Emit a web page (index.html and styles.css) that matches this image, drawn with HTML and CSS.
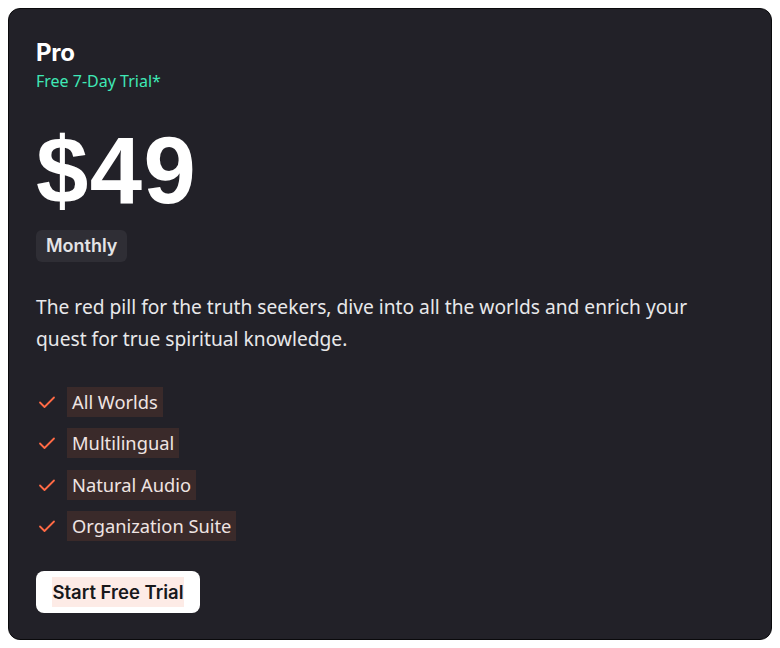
FILE: index.html
```html
<!DOCTYPE html>
<html>
<head>
<meta charset="utf-8">
<link rel="stylesheet" href="styles.css">
</head>
<body>
<div class="card">
  <div class="title">Pro</div>
  <div class="trial">Free 7-Day Trial*</div>
  <div class="price">$49</div>
  <div class="badge-row"><span class="badge">Monthly</span></div>
  <p class="desc">The red pill for the truth seekers, dive into all the worlds and enrich your quest for true spiritual knowledge.</p>
  <ul class="features">
    <li><svg class="check" viewBox="0 0 20 20"><path d="M3 10.5l4.5 4.5L17 5.5" fill="none" stroke="#ff6a45" stroke-width="1.8" stroke-linecap="round" stroke-linejoin="round"/></svg><span class="feat">All Worlds</span></li>
    <li><svg class="check" viewBox="0 0 20 20"><path d="M3 10.5l4.5 4.5L17 5.5" fill="none" stroke="#ff6a45" stroke-width="1.8" stroke-linecap="round" stroke-linejoin="round"/></svg><span class="feat">Multilingual</span></li>
    <li><svg class="check" viewBox="0 0 20 20"><path d="M3 10.5l4.5 4.5L17 5.5" fill="none" stroke="#ff6a45" stroke-width="1.8" stroke-linecap="round" stroke-linejoin="round"/></svg><span class="feat">Natural Audio</span></li>
    <li><svg class="check" viewBox="0 0 20 20"><path d="M3 10.5l4.5 4.5L17 5.5" fill="none" stroke="#ff6a45" stroke-width="1.8" stroke-linecap="round" stroke-linejoin="round"/></svg><span class="feat">Organization Suite</span></li>
  </ul>
  <button class="cta"><span class="cta-text">Start Free Trial</span></button>
</div>
</body>
</html>
```
FILE: styles.css
```css
html, body {
  margin: 0;
  padding: 0;
  background: #ffffff;
}
body {
  padding: 8px;
  font-family: "Noto Sans", "Open Sans", sans-serif;
}
.card {
  box-sizing: border-box;
  width: 764px;
  height: 632px;
  background: #222128;
  border: 1.5px solid #0a0a0c;
  border-radius: 12px;
  padding: 30px 28px 0 27px;
  color: #f0f0f0;
}
.title {
  font-family: Inter, sans-serif;
  font-weight: 700;
  font-size: 24px;
  line-height: 28px;
  color: #ffffff;
  letter-spacing: -0.3px;
}
.trial {
  margin-top: 3px;
  font-size: 16px;
  line-height: 22px;
  color: #3fe8b6;
}
.price {
  margin-top: 29px;
  font-family: "Liberation Sans", Arial, sans-serif;
  font-weight: 700;
  font-size: 94px;
  line-height: 100px;
  letter-spacing: 1.5px;
  color: #ffffff;
}
.badge-row {
  margin-top: 9px;
  display: flex;
}
.badge {
  font-family: Inter, sans-serif;
  font-weight: 600;
  font-size: 18px;
  line-height: 32px;
  padding: 0 10px;
  background: #2f2e35;
  border-radius: 6px;
  color: #e4e4e6;
}
.desc {
  margin: 29px 0 0 0;
  font-size: 19.2px;
  line-height: 32px;
  color: #e8e8ea;
  max-width: 680px;
}
.features {
  list-style: none;
  margin: 32px 0 0 0;
  padding: 0;
  display: flex;
  flex-direction: column;
  gap: 11.3px;
}
.features li {
  display: flex;
  align-items: center;
  height: 30px;
}
.check {
  width: 20px;
  height: 20px;
  margin-left: 1px;
  margin-right: 10px;
}
.feat {
  background: #3a2a2a;
  font-size: 18.3px;
  line-height: 30px;
  padding: 0 5px;
  color: #efe4e2;
}
.cta {
  margin-top: 30px;
  display: inline-flex;
  align-items: center;
  background: #ffffff;
  border: none;
  border-radius: 8px;
  height: 42px;
  width: 164px;
  justify-content: center;
  padding: 0;
  cursor: pointer;
}
.cta-text {
  font-family: Inter, sans-serif;
  font-weight: 600;
  font-size: 18.5px;
  line-height: 30px;
  color: #18181b;
  background: #fdebe6;
}
```
